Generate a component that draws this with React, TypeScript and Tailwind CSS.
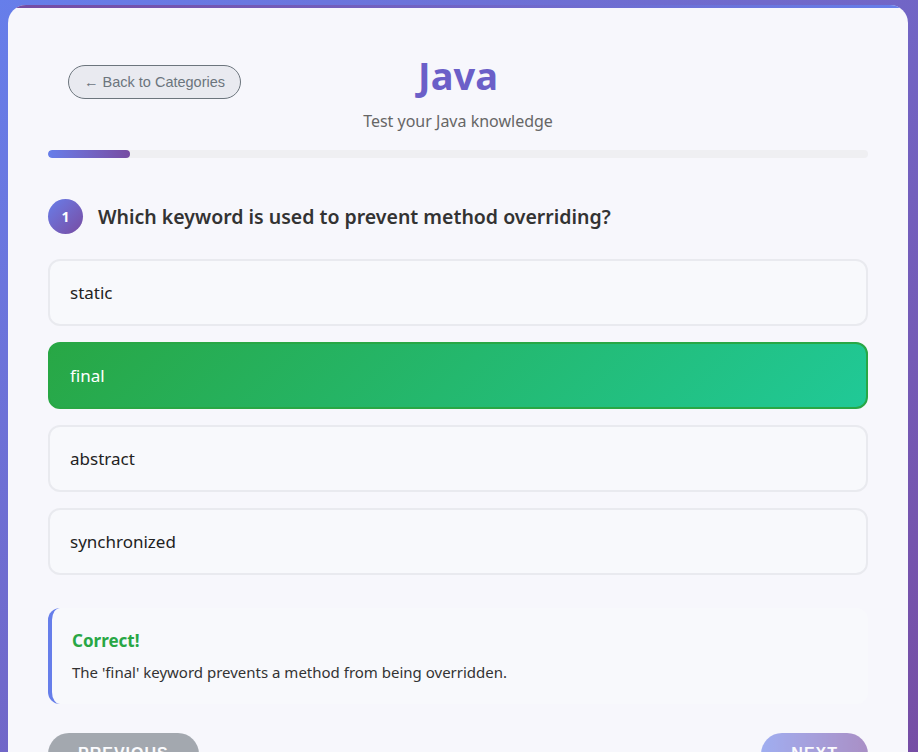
import React, { useState } from "react";

type Question = {
  text: string;
  options: string[];
  answer: number;
  explanation: string;
};

const questions: Question[] = [
  {
    text: "Which keyword is used to prevent method overriding?",
    options: ["static", "final", "abstract", "synchronized"],
    answer: 1,
    explanation: "The 'final' keyword prevents a method from being overridden.",
  },
];

const uiFont = { fontFamily: '"Noto Sans", "Open Sans", sans-serif' };

export default function App() {
  const [current] = useState(0);
  const [selected, setSelected] = useState<number | null>(1);
  const q = questions[current];
  const total = 10;
  const progress = ((current + 1) / total) * 100;

  return (
    <div className="min-h-screen bg-gradient-to-br from-[#667eea] to-[#764ba2] pl-2 pr-[10px] pt-[5px]" style={uiFont}>
      <div className="relative overflow-hidden rounded-[18px] bg-[#f7f7fc] px-10 pb-10 pt-10">
        <div className="absolute left-0 right-0 top-0 h-[3px] bg-gradient-to-r from-[#764ba2] to-[#667eea]" />

        <div className="relative mb-[17px] text-center">
          <button
            type="button"
            className="absolute left-5 top-5 rounded-full border border-[#6c757d] bg-[#e9eaf0] px-[15px] py-[7px] text-[14.5px] leading-[18px] text-[#6c757d]"
            style={{ fontFamily: '"Liberation Sans", Arial, sans-serif' }}
          >
            ← Back to Categories
          </button>
          <h1 className="pt-[4px] text-[38px] font-bold leading-[52px] text-[#6b5fc8]">Java</h1>
          <p className="mt-[8px] text-[16px] leading-[24px] text-[#666]">Test your Java knowledge</p>
        </div>

        <div className="h-[8px] w-full overflow-hidden rounded-full bg-[#efeff2]">
          <div
            className="h-full rounded-full bg-gradient-to-r from-[#667eea] to-[#764ba2]"
            style={{ width: `${progress}%` }}
          />
        </div>

        <div className="mt-[41px] flex items-center gap-[15px]">
          <div className="flex h-[35px] w-[35px] items-center justify-center rounded-full bg-gradient-to-br from-[#667eea] to-[#764ba2] text-[14px] font-bold text-white">
            {current + 1}
          </div>
          <h2 className="text-[19.5px] font-semibold leading-[28px] text-[#333]">{q.text}</h2>
        </div>

        <div className="mt-[25px] flex flex-col gap-4">
          {q.options.map((opt, i) => {
            const isCorrect = selected !== null && i === q.answer;
            return (
              <button
                key={opt}
                type="button"
                onClick={() => setSelected(i)}
                className={
                  isCorrect
                    ? "h-[67px] rounded-[12px] border-2 border-[#28a745] bg-[linear-gradient(135deg,#28a745,#20c997)] px-5 text-left text-[17px] text-white"
                    : "h-[67px] rounded-[12px] border-2 border-[#e9eaef] bg-[#f8f9fc] px-5 text-left text-[17px] text-[#222]"
                }
              >
                {opt}
              </button>
            );
          })}
        </div>

        {selected !== null && (
          <div className="mt-[33px] h-[96px] rounded-[12px] border-l-4 border-[#667eea] bg-[#f8f9fc] px-5 pt-[21px]">
            <div className="text-[17px] font-bold leading-[24px] text-[#28a745]">
              {selected === q.answer ? "Correct!" : "Incorrect"}
            </div>
            <p className="mt-[8px] text-[15px] leading-[22px] text-[#333]">{q.explanation}</p>
          </div>
        )}

        <div
          className="mt-[29px] flex items-center justify-between"
          style={{ fontFamily: '"Liberation Sans", Arial, sans-serif' }}
        >
          <button
            type="button"
            disabled
            className="rounded-full bg-[#6c757d] px-[30px] py-[12px] text-[16px] font-bold uppercase leading-[18px] tracking-[1px] text-white opacity-60"
          >
            Previous
          </button>
          <button
            type="button"
            className="rounded-full bg-gradient-to-r from-[#667eea] to-[#764ba2] px-[30px] py-[12px] text-[16px] font-bold uppercase leading-[18px] tracking-[1px] text-white opacity-60"
          >
            Next
          </button>
        </div>
      </div>
    </div>
  );
}
